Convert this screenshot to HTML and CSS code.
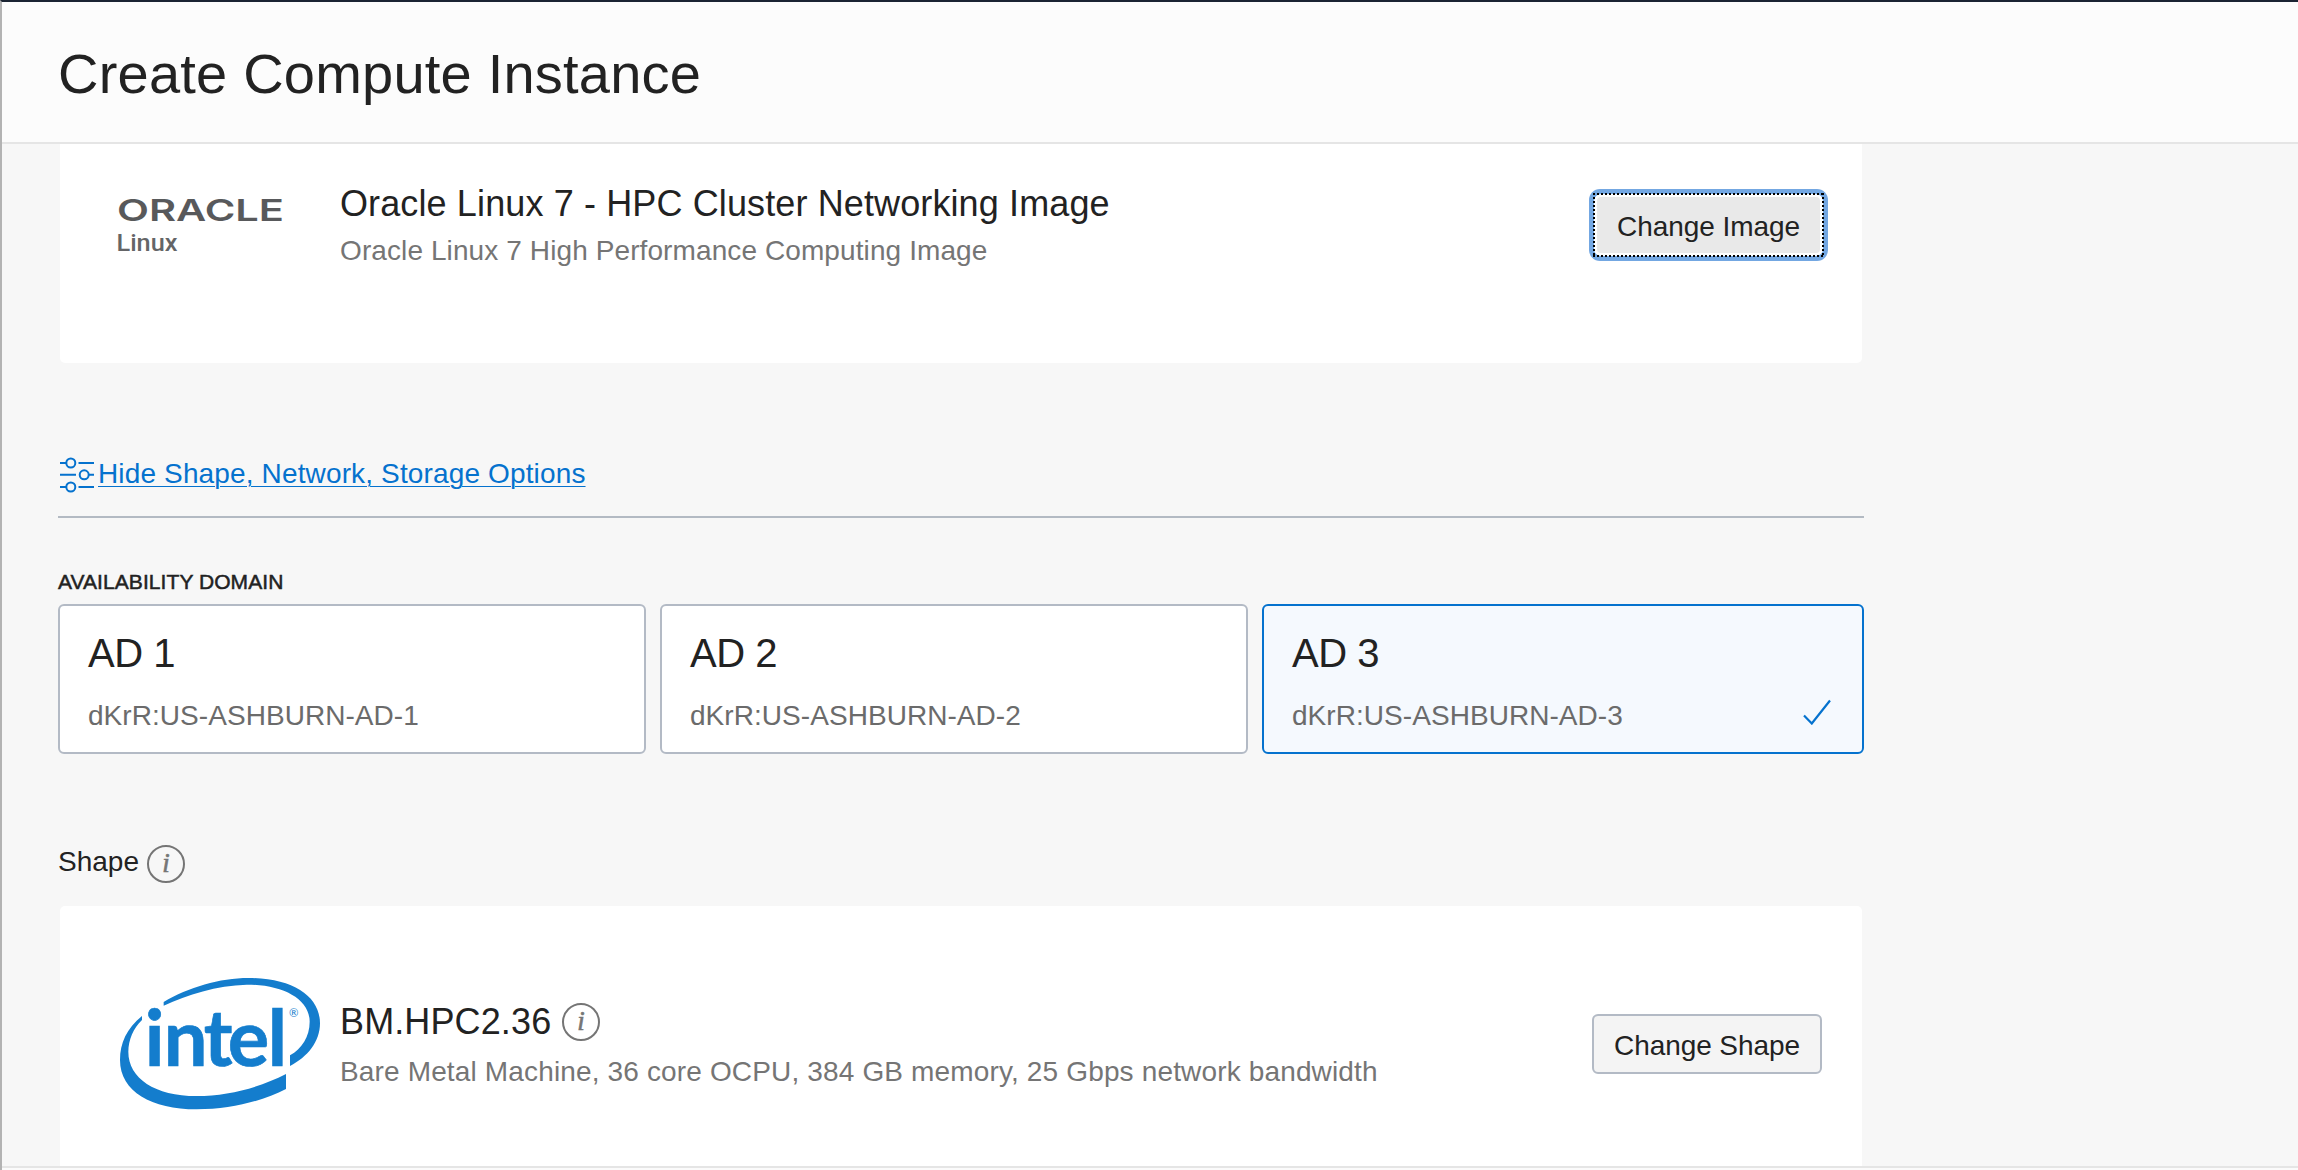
FILE: index.html
```html
<!DOCTYPE html>
<html lang="en">
<head>
<meta charset="utf-8">
<title>Create Compute Instance</title>
<link rel="stylesheet" href="styles.css">
</head>
<body>
<div class="panel">
  <header class="panel-header">
    <h1 class="panel-title">Create Compute Instance</h1>
  </header>

  <main class="panel-body">
    <section class="card card-image">
      <div class="card-logo">
        <svg class="oracle-logo" width="184" height="72" viewBox="-4 -8 184 72" role="img" aria-label="Oracle Linux">
          <text class="oracle-word" x="-1" y="27" textLength="167" lengthAdjust="spacingAndGlyphs">ORACLE</text>
          <text class="oracle-product" x="-1.500" y="57" textLength="61" lengthAdjust="spacingAndGlyphs">Linux</text>
        </svg>
      </div>
      <div class="card-text">
        <h2 class="card-title">Oracle Linux 7 - HPC Cluster Networking Image</h2>
        <p class="card-desc">Oracle Linux 7 High Performance Computing Image</p>
      </div>
      <button class="btn btn-focused" type="button">Change Image</button>
    </section>

    <div class="options-toggle">
      <svg class="sliders" width="36" height="36" viewBox="0 0 36 36" fill="none" stroke="currentColor" stroke-width="2">
        <path d="M0 6h6M18.500 6H34M0 17.800h16M29 17.800H34M0 30h6M18.500 30H34"/>
        <circle cx="10.800" cy="6" r="4.500"/>
        <circle cx="24.200" cy="17.800" r="4.500"/>
        <circle cx="10.800" cy="30" r="4.500"/>
      </svg>
      <a class="options-link" href="#">Hide Shape, Network, Storage Options</a>
    </div>

    <h3 class="group-label">AVAILABILITY DOMAIN</h3>
    <div class="domains">
      <div class="domain">
        <div class="domain-name">AD 1</div>
        <div class="domain-id">dKrR:US-ASHBURN-AD-1</div>
      </div>
      <div class="domain">
        <div class="domain-name">AD 2</div>
        <div class="domain-id">dKrR:US-ASHBURN-AD-2</div>
      </div>
      <div class="domain domain-selected">
        <div class="domain-name">AD 3</div>
        <div class="domain-row">
          <div class="domain-id">dKrR:US-ASHBURN-AD-3</div>
          <svg class="check" width="28" height="26" viewBox="0 0 28 26" fill="none" stroke="currentColor" stroke-width="2.200">
            <path d="M1 16.500L8.800 24.500L27 1.500"/>
          </svg>
        </div>
      </div>
    </div>

    <div class="shape-label">
      <span class="shape-text">Shape</span>
      <svg class="info" width="40" height="40" viewBox="0 0 40 40">
        <circle cx="20" cy="20" r="18"/>
        <text x="20" y="28" text-anchor="middle">i</text>
      </svg>
    </div>

    <section class="card card-shape">
      <div class="card-logo">
        <svg class="intel-logo" width="204" height="136" viewBox="54 48 612 408" role="img" aria-label="Intel">
          <path d="M191 126C265 82 360 54 445 54C580 54 660 110 660 190C660 245 622 292 570 318V286C605 266 629 230 629 185C629 115 545 74 440 74C350 76 262 104 191 137Z"/>
          <path d="M126 168C80 205 60 250 60 300C60 395 155 448 290 448C395 448 490 422 558 387V342C480 382 385 408 290 408C165 408 85 355 85 275C85 240 100 205 126 180Z"/>
          <text class="intel-word" x="134 191 311 383 503" y="318">intel</text>
          <text class="intel-mark" x="581" y="170" text-anchor="middle">®</text>
        </svg>
      </div>
      <div class="card-text">
        <div class="card-heading">
          <h2 class="card-title">BM.HPC2.36</h2>
          <svg class="info" width="40" height="40" viewBox="0 0 40 40">
            <circle cx="20" cy="20" r="18"/>
            <text x="20" y="28" text-anchor="middle">i</text>
          </svg>
        </div>
        <p class="card-desc card-desc-wide">Bare Metal Machine, 36 core OCPU, 384 GB memory, 25 Gbps network bandwidth</p>
      </div>
      <button class="btn" type="button">Change Shape</button>
    </section>
  </main>
  <footer class="panel-footer"></footer>
</div>
</body>
</html>
```
FILE: styles.css
```css
* {
  box-sizing: border-box;
}

body {
  margin: 0;
  background: #f7f7f7;
  color: #222;
  font: 28px/36px "Liberation Sans", Arial, sans-serif;
}

h1, h2, h3, p {
  margin: 0;
  font-weight: 400;
}

.panel {
  display: flex;
  flex-direction: column;
  height: 1170px;
  overflow: hidden;
  border-top: 2px solid #1b2433;
  border-left: 2px solid #b3b3b3;
}

.panel-header {
  flex: none;
  height: 142px;
  padding: 40px 56px 0;
  background: #fcfcfc;
  border-bottom: 2px solid #e5e5e5;
}

.panel-title {
  font-size: 56px;
  line-height: 64px;
  letter-spacing: 0.22px;
}

.panel-body {
  flex: none;
  height: 1022px;
  width: 1862px;
  padding-left: 56px;
  overflow: hidden;
}

.panel-footer {
  flex: 1;
  background: #fbfbfb;
  border-top: 2px solid #e5e5e5;
}

.card {
  display: flex;
  align-items: flex-start;
  margin: 0 2px;
  background: #fff;
}

.card-image {
  height: 219px;
  padding: 38px 42px 0 54px;
  border-radius: 0 0 5px 5px;
}

.card-shape {
  height: 264px;
  margin-top: 22px;
  padding: 70px 40px 0 54px;
  border-radius: 5px 5px 0 0;
}

.card-logo {
  flex: none;
  width: 226px;
}

.card-logo svg {
  display: block;
}

.card-text {
  flex: 1;
}

.card-title {
  font-size: 36px;
  line-height: 44px;
  letter-spacing: 0.12px;
}

.card-desc {
  margin-top: 7px;
  color: #757575;
  letter-spacing: 0.1px;
}

.card-desc-wide {
  margin-top: 10px;
  letter-spacing: 0.15px;
}

.card-heading {
  display: flex;
  align-items: center;
  gap: 10px;
}

.card-shape .card-text {
  padding-top: 24px;
}

.oracle-logo {
  margin-top: 4px;
}

.oracle-word {
  font: 600 30px Inter, sans-serif;
  fill: #58595b;
}

.oracle-product {
  font: 500 23px Roboto, sans-serif;
  fill: #646567;
}

.intel-logo {
  margin-left: 4px;
  fill: #147dcd;
}

.intel-word {
  font: bold 233px Lato, sans-serif;
  stroke: #147dcd;
  stroke-width: 2px;
}

.intel-mark {
  font: 34px Lato, sans-serif;
}

.btn {
  flex: none;
  width: 230px;
  height: 60px;
  margin-top: 38px;
  padding: 4px 0 0;
  border: 2px solid #b3bac5;
  border-radius: 6px;
  background: #f4f4f4;
  color: #222;
  font: inherit;
  letter-spacing: -0.07px;
}

.btn-focused {
  position: relative;
  width: 223px;
  height: 56px;
  margin-top: 15px;
  border: 0;
  border-radius: 4px;
  background: #e9e9e9;
  box-shadow: 0 0 0 3px #fff, 0 0 0 8px #73a7e2;
}

/* dotted focus ring laid over the blue glow */
.btn-focused::after {
  content: "";
  position: absolute;
  inset: -4px;
  background:
    repeating-linear-gradient(90deg, #000 0 2px, transparent 2px 4px) top / 100% 2px no-repeat,
    repeating-linear-gradient(90deg, #000 0 2px, transparent 2px 4px) bottom / 100% 2px no-repeat,
    repeating-linear-gradient(#000 0 2px, transparent 2px 4px) left / 2px 100% no-repeat,
    repeating-linear-gradient(#000 0 2px, transparent 2px 4px) right / 2px 100% no-repeat;
}

.options-toggle {
  display: flex;
  height: 63px;
  margin-top: 92px;
  padding-left: 2px;
  border-bottom: 2px solid #b3bac3;
  color: #0572ce;
}

.sliders {
  margin-top: 2px;
}

.options-link {
  margin-left: 2px;
  padding-top: 1px;
  color: inherit;
  letter-spacing: 0.14px;
  text-decoration-thickness: 1px;
  text-underline-offset: 3px;
}

.group-label {
  margin-top: 52px;
  font-size: 21px;
  line-height: 24px;
  letter-spacing: 0.07px;
  -webkit-text-stroke: 0.5px #222;
}

.domains {
  display: grid;
  grid-template-columns: 588px 588px 602px;
  gap: 14px;
  margin-top: 10px;
}

.domain {
  height: 150px;
  padding: 23px 28px 0;
  border: 2px solid #b3bac5;
  border-radius: 6px;
  background: #fff;
}

.domain-selected {
  border-color: #0572ce;
  background: #f5f9fe;
}

.domain-name {
  font-size: 40px;
  line-height: 48px;
  letter-spacing: -0.5px;
}

.domain-id {
  margin-top: 21px;
  color: #6b6b6b;
  letter-spacing: 0.05px;
}

.domain-row {
  display: flex;
  justify-content: space-between;
}

.check {
  margin: 22px 3px 0 0;
  color: #0572ce;
}

.shape-label {
  display: flex;
  align-items: flex-start;
  gap: 7px;
  height: 41px;
  margin-top: 89px;
}

.shape-text {
  padding-top: 1px;
}

.shape-label .info {
  margin-top: 1px;
}

.info circle {
  fill: none;
  stroke: #757575;
  stroke-width: 2;
}

.info text {
  font: italic 27px "Liberation Serif", serif;
  fill: #757575;
  stroke: #757575;
  stroke-width: 0.6px;
}
```
